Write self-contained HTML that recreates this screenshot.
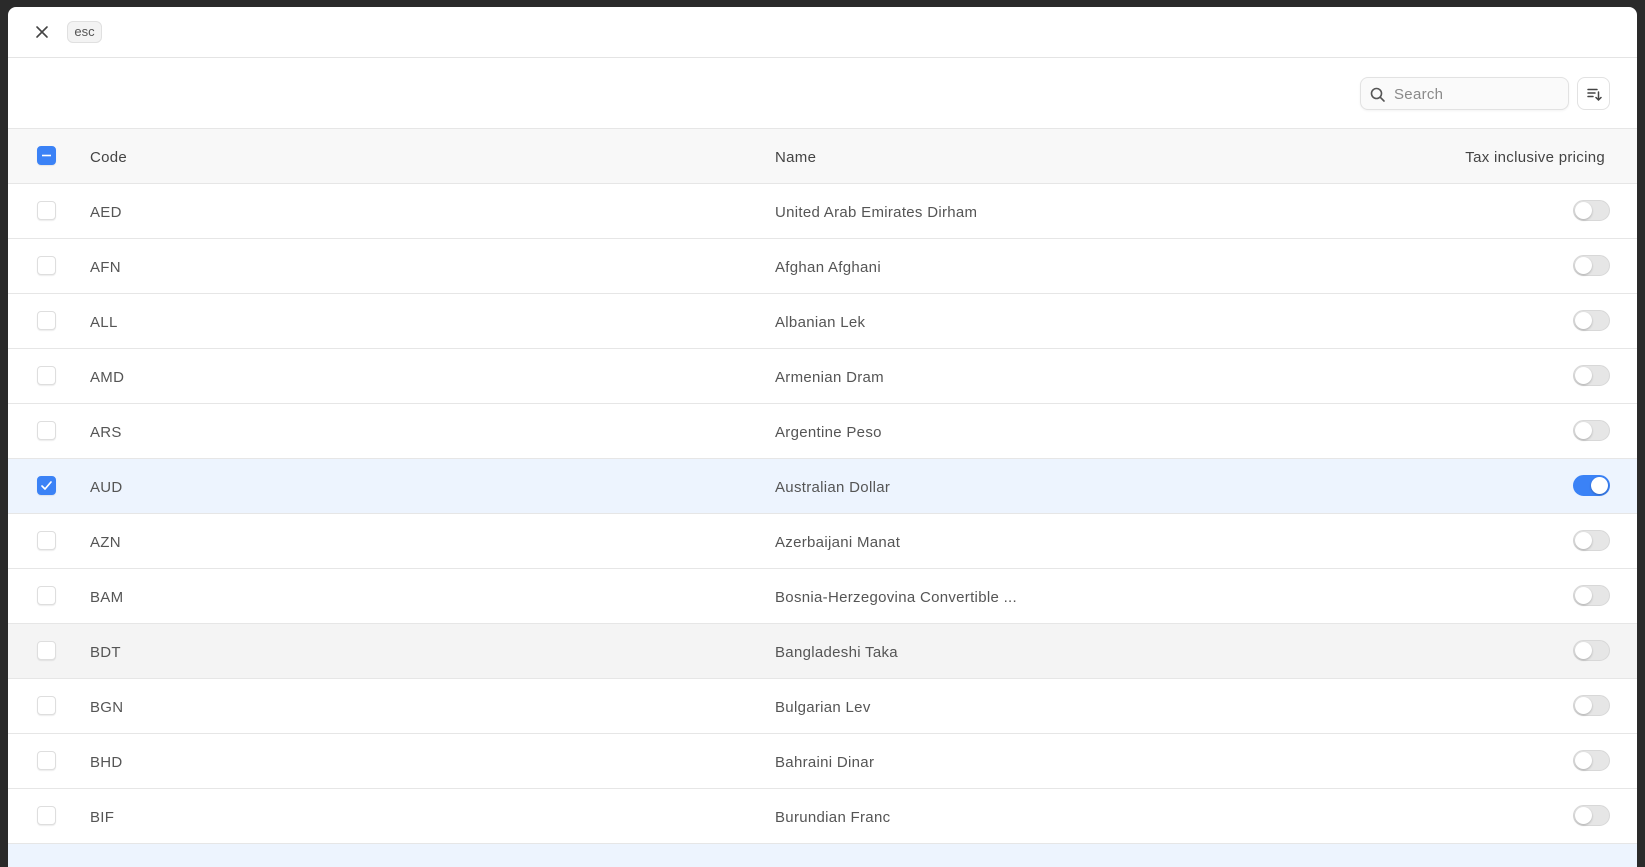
<!DOCTYPE html>
<html><head><style>
*{box-sizing:border-box;margin:0;padding:0}
body{width:1645px;height:857px;background:#2a2a2a;font-family:"Liberation Sans",sans-serif;overflow:hidden;position:relative}
.panel{position:absolute;left:8px;top:7px;width:1629px;height:860px;background:#fff;border-radius:8px 8px 0 0;overflow:hidden}
.top{height:51px;border-bottom:1px solid #e4e4e4;position:relative}
.x{position:absolute;left:27px;top:18px}
.esc{position:absolute;left:59px;top:14px;width:35px;height:22px;border:1px solid #e0e0e0;background:#f3f3f3;border-radius:6px;font-size:13px;color:#555;text-align:center;line-height:20px}
.tool{height:70px;position:relative}
.search{position:absolute;left:1352px;top:19px;width:209px;height:33px;border:1px solid #e2e2e2;border-radius:8px;background:#fafafa;box-shadow:0 1px 2px rgba(0,0,0,.05)}
.search span{position:absolute;left:33px;top:8px;font-size:15px;color:#8a8a8a;letter-spacing:.3px}
.search svg{position:absolute;left:9px;top:9px}
.sort{position:absolute;left:1569px;top:19px;width:33px;height:33px;border:1px solid #e2e2e2;border-radius:8px;background:#fff}
.sort svg{position:absolute;left:8px;top:8px}
.row{height:55px;border-top:1px solid #e6e6e6;position:relative;font-size:15px;color:#555;letter-spacing:.3px}
.row.h{background:#f8f8f8;color:#444}
.row.sel{background:#edf4fe}
.row.hov{background:#f4f4f4}
.cb{position:absolute;left:29px;top:17px;width:19px;height:19px;border:1px solid #dedede;border-radius:4px;background:#fff;box-shadow:0 1px 1px rgba(0,0,0,.08)}
.cb.on{background:#3b82f6;border-color:#3b82f6}
.c{position:absolute;left:82px;top:20px}
.n{position:absolute;left:767px;top:20px}
.t{position:absolute;right:32px;top:20px}
.tg{position:absolute;left:1565px;top:16px;width:37px;height:21px;border-radius:11px;background:#e6e6e6;border:1px solid #d8d8d8}
.tg::after{content:"";position:absolute;left:1px;top:1px;width:17px;height:17px;border-radius:50%;background:#fff;box-shadow:0 1px 2px rgba(0,0,0,.25)}
.tg.on{background:#3b82f6;border-color:#3b82f6}
.tg.on::after{left:17px}
</style></head><body>
<div class="panel">
<div class="top">
<svg class="x" width="14" height="14" viewBox="0 0 14 14"><path d="M2 2L12 12M12 2L2 12" stroke="#444" stroke-width="1.6" stroke-linecap="round"/></svg>
<div class="esc">esc</div>
</div>
<div class="tool">
<div class="search"><svg width="16" height="16" viewBox="0 0 16 16"><circle cx="6.5" cy="6.5" r="5" fill="none" stroke="#555" stroke-width="1.6"/><path d="M10.3 10.3L14 14" stroke="#555" stroke-width="1.6" stroke-linecap="round"/></svg><span>Search</span></div>
<div class="sort"><svg width="16" height="16" viewBox="0 0 16 16"><path d="M2 3.5H11M2 7H9M2 10.5H7M12.5 6V14M10 11.5L12.5 14L15 11.5" stroke="#444" stroke-width="1.5" fill="none" stroke-linecap="round"/></svg></div>
</div>
<div class="row h"><div class="cb on"><svg width="17" height="17" viewBox="0 0 17 17" style="position:absolute;left:0;top:0"><path d="M4 8.5H13" stroke="#fff" stroke-width="1.6"/></svg></div><span class="c">Code</span><span class="n">Name</span><span class="t">Tax inclusive pricing</span></div>
<div class="row"><div class="cb"></div><span class="c">AED</span><span class="n">United Arab Emirates Dirham</span><div class="tg"></div></div>
<div class="row"><div class="cb"></div><span class="c">AFN</span><span class="n">Afghan Afghani</span><div class="tg"></div></div>
<div class="row"><div class="cb"></div><span class="c">ALL</span><span class="n">Albanian Lek</span><div class="tg"></div></div>
<div class="row"><div class="cb"></div><span class="c">AMD</span><span class="n">Armenian Dram</span><div class="tg"></div></div>
<div class="row"><div class="cb"></div><span class="c">ARS</span><span class="n">Argentine Peso</span><div class="tg"></div></div>
<div class="row sel"><div class="cb on"><svg width="17" height="17" viewBox="0 0 17 17" style="position:absolute;left:0;top:0"><path d="M4 9L7 12L13 5" stroke="#fff" stroke-width="1.7" fill="none" stroke-linecap="round" stroke-linejoin="round"/></svg></div><span class="c">AUD</span><span class="n">Australian Dollar</span><div class="tg on"></div></div>
<div class="row"><div class="cb"></div><span class="c">AZN</span><span class="n">Azerbaijani Manat</span><div class="tg"></div></div>
<div class="row"><div class="cb"></div><span class="c">BAM</span><span class="n">Bosnia-Herzegovina Convertible ...</span><div class="tg"></div></div>
<div class="row hov"><div class="cb"></div><span class="c">BDT</span><span class="n">Bangladeshi Taka</span><div class="tg"></div></div>
<div class="row"><div class="cb"></div><span class="c">BGN</span><span class="n">Bulgarian Lev</span><div class="tg"></div></div>
<div class="row"><div class="cb"></div><span class="c">BHD</span><span class="n">Bahraini Dinar</span><div class="tg"></div></div>
<div class="row"><div class="cb"></div><span class="c">BIF</span><span class="n">Burundian Franc</span><div class="tg"></div></div>
<div class="row sel"></div>
</div>
</body></html>
